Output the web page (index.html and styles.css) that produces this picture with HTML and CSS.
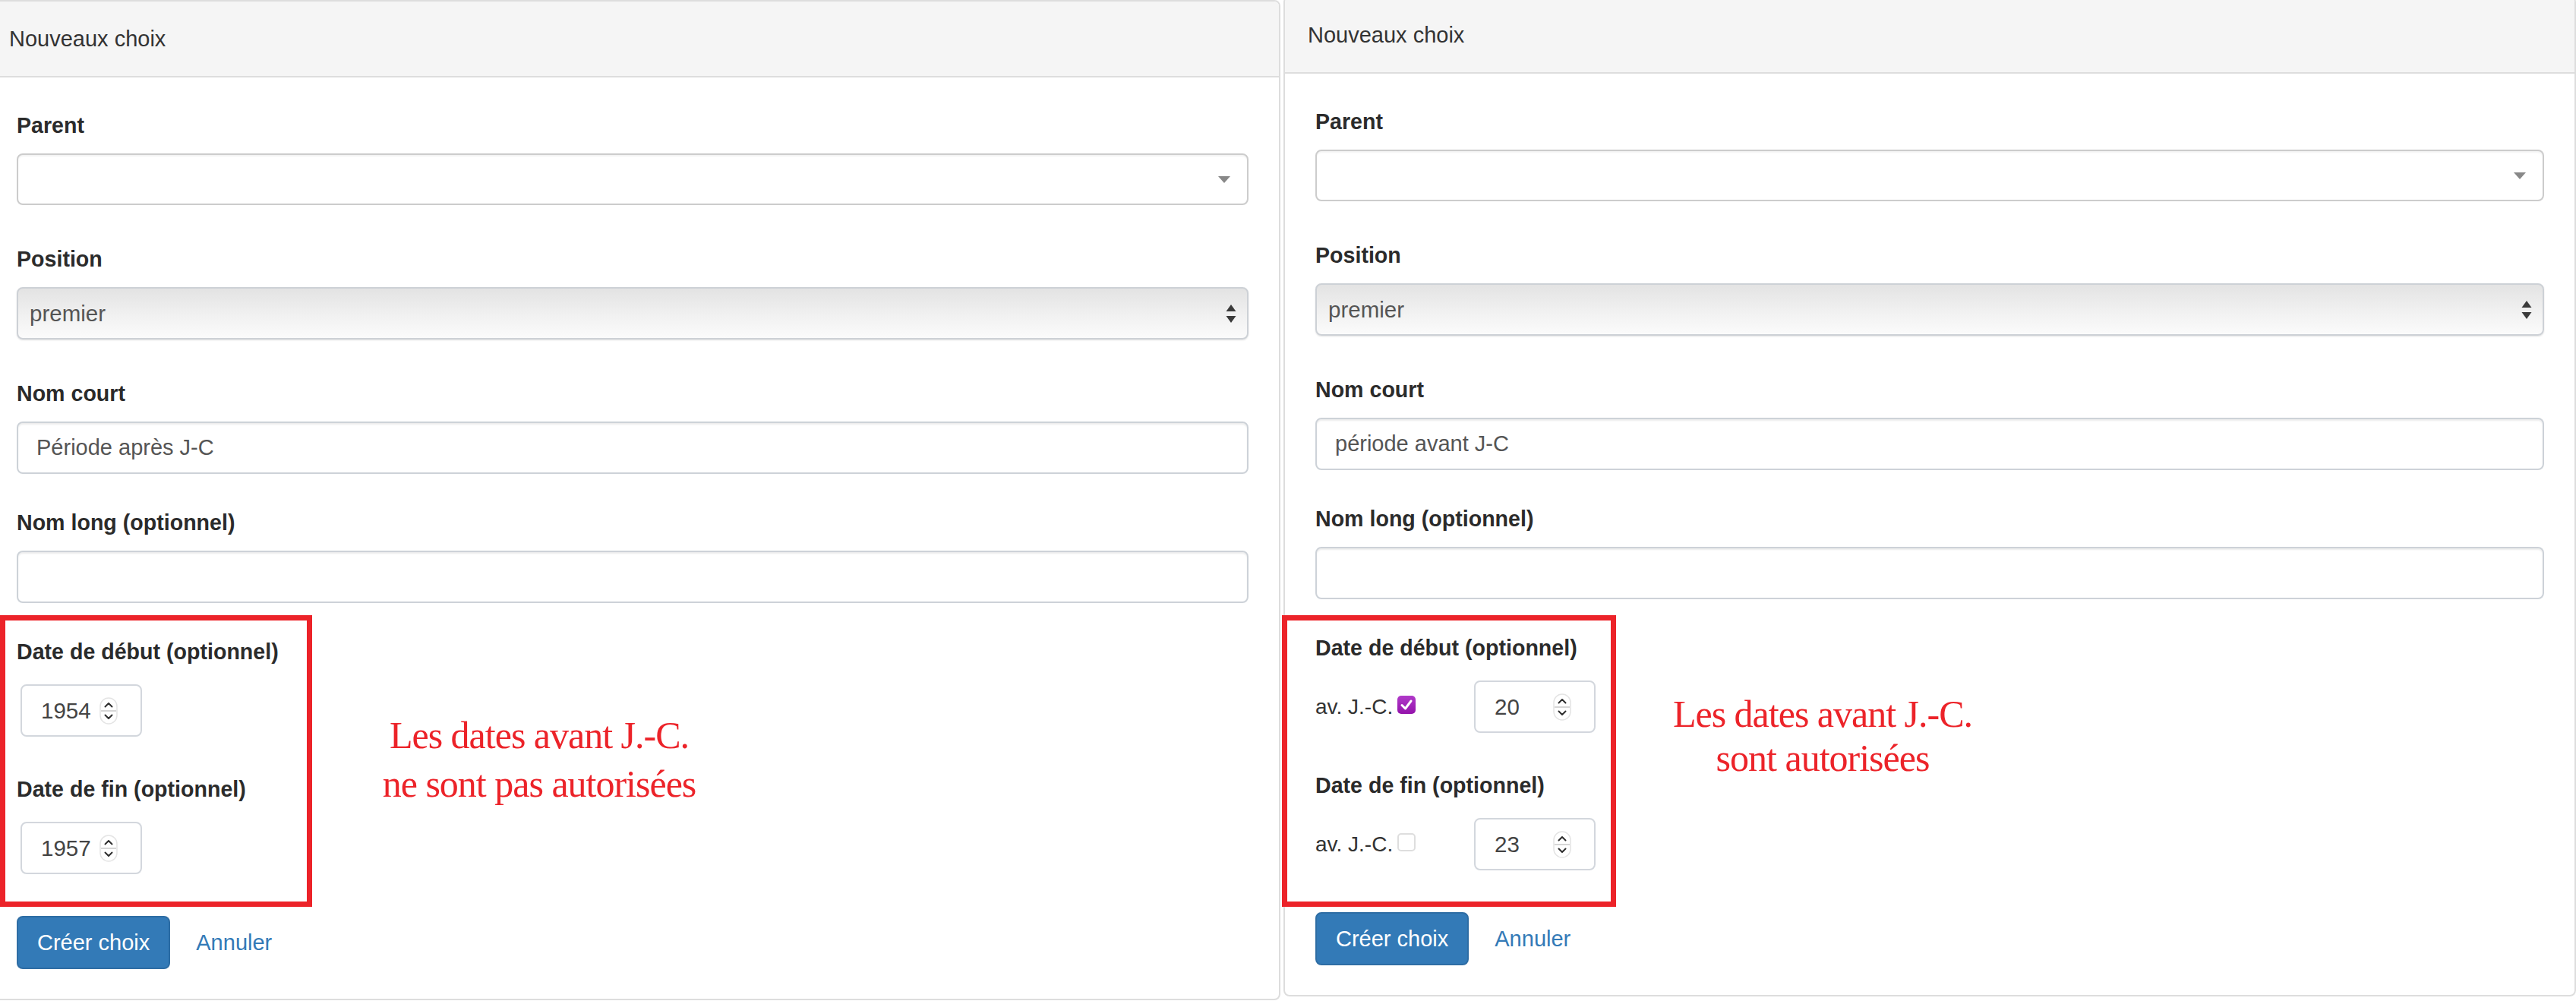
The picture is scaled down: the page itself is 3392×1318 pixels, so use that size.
FILE: index.html
```html
<!DOCTYPE html>
<html lang="fr">
<head>
<meta charset="utf-8">
<title>Nouveaux choix</title>
<link rel="stylesheet" href="styles.css">
</head>
<body>
<div class="screens">

  <section class="panel panel--before">
    <header class="panel-heading">Nouveaux choix</header>
    <div class="panel-body">
      <div class="group group--loose">
        <label class="label">Parent</label>
        <div class="combo"><span class="combo-arrow"></span></div>
      </div>
      <div class="group group--loose">
        <label class="label">Position</label>
        <div class="native-select">
          <span class="select-value">premier</span>
          <svg class="updown" viewBox="0 0 14 24" width="14" height="24"><path d="M7 0 L13.5 9 L0.5 9 Z" fill="#3a3a3a"/><path d="M0.5 15 L13.5 15 L7 24 Z" fill="#3a3a3a"/></svg>
        </div>
      </div>
      <div class="group">
        <label class="label">Nom court</label>
        <div class="field">Période après J-C</div>
      </div>
      <div class="group">
        <label class="label">Nom long (optionnel)</label>
        <div class="field"></div>
      </div>

      <div class="dates">
        <div class="date-group">
          <label class="label date-label">Date de début (optionnel)</label>
          <div class="number number--indent">
            <span class="number-value">1954</span>
            <svg class="spin" viewBox="0 0 24 36" width="24" height="36"><rect x="1" y="1" width="22" height="34" rx="11" fill="#fff" stroke="#e4e4e4" stroke-width="1.5"/><line x1="2" y1="18" x2="22" y2="18" stroke="#d6d6d6" stroke-width="2"/><path d="M7.5 12.5 L12 8 L16.5 12.5" fill="none" stroke="#2f2f2f" stroke-width="2" stroke-linecap="round" stroke-linejoin="round"/><path d="M7.5 23.5 L12 28 L16.5 23.5" fill="none" stroke="#2f2f2f" stroke-width="2" stroke-linecap="round" stroke-linejoin="round"/></svg>
          </div>
        </div>
        <div class="date-group">
          <label class="label date-label">Date de fin (optionnel)</label>
          <div class="number number--indent">
            <span class="number-value">1957</span>
            <svg class="spin" viewBox="0 0 24 36" width="24" height="36"><rect x="1" y="1" width="22" height="34" rx="11" fill="#fff" stroke="#e4e4e4" stroke-width="1.5"/><line x1="2" y1="18" x2="22" y2="18" stroke="#d6d6d6" stroke-width="2"/><path d="M7.5 12.5 L12 8 L16.5 12.5" fill="none" stroke="#2f2f2f" stroke-width="2" stroke-linecap="round" stroke-linejoin="round"/><path d="M7.5 23.5 L12 28 L16.5 23.5" fill="none" stroke="#2f2f2f" stroke-width="2" stroke-linecap="round" stroke-linejoin="round"/></svg>
          </div>
        </div>
        <div class="frame frame--before"></div>
        <p class="note note--before">Les dates avant J.-C.<br>ne sont pas autorisées</p>
      </div>

      <div class="actions">
        <button class="btn" type="button">Créer choix</button>
        <a class="link" href="#">Annuler</a>
      </div>
    </div>
  </section>

  <section class="panel panel--after">
    <header class="panel-heading">Nouveaux choix</header>
    <div class="panel-body">
      <div class="group group--loose">
        <label class="label">Parent</label>
        <div class="combo"><span class="combo-arrow"></span></div>
      </div>
      <div class="group group--loose">
        <label class="label">Position</label>
        <div class="native-select">
          <span class="select-value">premier</span>
          <svg class="updown" viewBox="0 0 14 24" width="14" height="24"><path d="M7 0 L13.5 9 L0.5 9 Z" fill="#3a3a3a"/><path d="M0.5 15 L13.5 15 L7 24 Z" fill="#3a3a3a"/></svg>
        </div>
      </div>
      <div class="group">
        <label class="label">Nom court</label>
        <div class="field">période avant J-C</div>
      </div>
      <div class="group">
        <label class="label">Nom long (optionnel)</label>
        <div class="field"></div>
      </div>

      <div class="dates">
        <div class="date-group">
          <label class="label date-label">Date de début (optionnel)</label>
          <div class="date-row">
            <span class="bc">av. J.-C.<span class="check check--on"><svg viewBox="0 0 24 24" width="24" height="24"><path d="M6 12.5 L10.5 17 L18 7" fill="none" stroke="#fff" stroke-width="3" stroke-linecap="round" stroke-linejoin="round"/></svg></span></span>
            <div class="number">
              <span class="number-value">20</span>
              <svg class="spin" viewBox="0 0 24 36" width="24" height="36"><rect x="1" y="1" width="22" height="34" rx="11" fill="#fff" stroke="#e4e4e4" stroke-width="1.5"/><line x1="2" y1="18" x2="22" y2="18" stroke="#d6d6d6" stroke-width="2"/><path d="M7.5 12.5 L12 8 L16.5 12.5" fill="none" stroke="#2f2f2f" stroke-width="2" stroke-linecap="round" stroke-linejoin="round"/><path d="M7.5 23.5 L12 28 L16.5 23.5" fill="none" stroke="#2f2f2f" stroke-width="2" stroke-linecap="round" stroke-linejoin="round"/></svg>
            </div>
          </div>
        </div>
        <div class="date-group">
          <label class="label date-label">Date de fin (optionnel)</label>
          <div class="date-row">
            <span class="bc">av. J.-C.<span class="check"></span></span>
            <div class="number">
              <span class="number-value">23</span>
              <svg class="spin" viewBox="0 0 24 36" width="24" height="36"><rect x="1" y="1" width="22" height="34" rx="11" fill="#fff" stroke="#e4e4e4" stroke-width="1.5"/><line x1="2" y1="18" x2="22" y2="18" stroke="#d6d6d6" stroke-width="2"/><path d="M7.5 12.5 L12 8 L16.5 12.5" fill="none" stroke="#2f2f2f" stroke-width="2" stroke-linecap="round" stroke-linejoin="round"/><path d="M7.5 23.5 L12 28 L16.5 23.5" fill="none" stroke="#2f2f2f" stroke-width="2" stroke-linecap="round" stroke-linejoin="round"/></svg>
            </div>
          </div>
        </div>
        <div class="frame frame--after"></div>
        <p class="note note--after">Les dates avant J.-C.<br>sont autorisées</p>
      </div>

      <div class="actions">
        <button class="btn" type="button">Créer choix</button>
        <a class="link" href="#">Annuler</a>
      </div>
    </div>
  </section>

</div>
</body>
</html>
```

FILE: styles.css
```css
* {
  box-sizing: border-box;
}

html,
body {
  margin: 0;
  padding: 0;
  height: 100%;
}

body {
  background: #ffffff;
  font-family: "Liberation Sans", Arial, Helvetica, sans-serif;
  color: #333333;
  overflow: hidden;
}

.screens {
  display: flex;
  align-items: flex-start;
  gap: 4px;
  margin-left: -20px;
}

.panel {
  background: #ffffff;
  border: 2px solid #dddddd;
  border-radius: 8px;
}

.panel--before {
  width: 1706px;
  flex: none;
}

.panel--after {
  flex: 1;
  margin-top: -5px;
}

.panel-heading {
  display: flex;
  align-items: center;
  height: 100px;
  padding-left: 30px;
  background: #f5f5f5;
  border-bottom: 2px solid #dddddd;
  border-radius: 6px 6px 0 0;
  font-size: 29px;
  color: #333333;
}

.panel-body {
  padding: 43px 40px 39px;
}

.label {
  display: block;
  font-size: 28.6px;
  line-height: 40px;
  font-weight: bold;
  color: #2b2b2b;
  margin-bottom: 17px;
}

.group {
  margin-bottom: 44px;
}

.group--loose {
  margin-bottom: 51px;
}

/* select2-like combo */
.combo {
  position: relative;
  height: 68px;
  background: #ffffff;
  border: 2px solid #cccccc;
  border-radius: 8px;
  box-shadow: inset 0 2px 2px rgba(0, 0, 0, 0.05);
}

.combo-arrow {
  position: absolute;
  right: 22px;
  top: 28px;
  width: 0;
  height: 0;
  border-left: 8px solid transparent;
  border-right: 8px solid transparent;
  border-top: 9px solid #888888;
}

/* native mac-like select */
.native-select {
  display: flex;
  align-items: center;
  justify-content: space-between;
  height: 69px;
  padding: 0 14px 0 15px;
  border: 2px solid #cdd1d6;
  border-radius: 8px;
  background: linear-gradient(#e3e3e3, #f1f1f1 55%, #fbfbfb);
  box-shadow: 0 1px 2px rgba(0, 0, 0, 0.12);
  font-size: 29.5px;
  color: #555555;
}

.updown {
  display: block;
}

.field {
  display: flex;
  align-items: center;
  height: 69px;
  padding: 0 24px;
  border: 2px solid #cdd2d8;
  border-radius: 8px;
  background: #ffffff;
  box-shadow: inset 0 2px 2px rgba(0, 0, 0, 0.075);
  font-size: 29px;
  color: #555555;
}

/* dates */
.dates {
  position: relative;
}

.date-label {
  margin-bottom: 23px;
}

.date-group + .date-group {
  margin-top: 49px;
}

.number {
  display: flex;
  align-items: center;
  justify-content: space-between;
  width: 160px;
  height: 69px;
  padding: 0 30px 0 25px;
  border: 2px solid #d3d7dd;
  border-radius: 8px;
  background: #ffffff;
  font-size: 29.5px;
  color: #444444;
}

.number--indent {
  margin-left: 5px;
}

.spin {
  display: block;
}

.date-row {
  display: flex;
  align-items: center;
}

.bc {
  width: 209px;
  flex: none;
  font-size: 28px;
  color: #333333;
  white-space: nowrap;
}

.check {
  display: inline-block;
  width: 24px;
  height: 24px;
  margin-left: 6px;
  vertical-align: baseline;
  border: 2px solid #dedede;
  border-radius: 5px;
  background: #ffffff;
}

.check--on {
  border: none;
  background: linear-gradient(#b03ac9, #9413ab);
}

.check--on svg {
  display: block;
}

/* annotations drawn over the screenshots */
.frame {
  position: absolute;
  height: 384px;
  border: 7px solid #ec2329;
  z-index: 2;
  pointer-events: none;
}

.frame--before {
  left: -22px;
  top: -28px;
  width: 411px;
}

.frame--after {
  left: -44px;
  top: -23px;
  width: 440px;
}

.note {
  position: absolute;
  width: 500px;
  margin: 0;
  text-align: center;
  font-family: "Liberation Serif", "Times New Roman", serif;
  font-size: 50px;
  color: #ec2329;
  letter-spacing: -1px;
}

.note--before {
  left: 438px;
  top: 98px;
  line-height: 64px;
}

.note--after {
  left: 418px;
  top: 78px;
  line-height: 58px;
}

/* actions */
.actions {
  display: flex;
  align-items: center;
  margin-top: 55px;
}

.btn {
  height: 70px;
  padding: 0 25px;
  border: 2px solid #2e6da4;
  border-radius: 8px;
  background: #337ab7;
  color: #ffffff;
  font-family: "Liberation Sans", Arial, Helvetica, sans-serif;
  font-size: 29px;
  cursor: pointer;
}

.link {
  margin-left: 34px;
  font-size: 29px;
  color: #337ab7;
  text-decoration: none;
}
```
